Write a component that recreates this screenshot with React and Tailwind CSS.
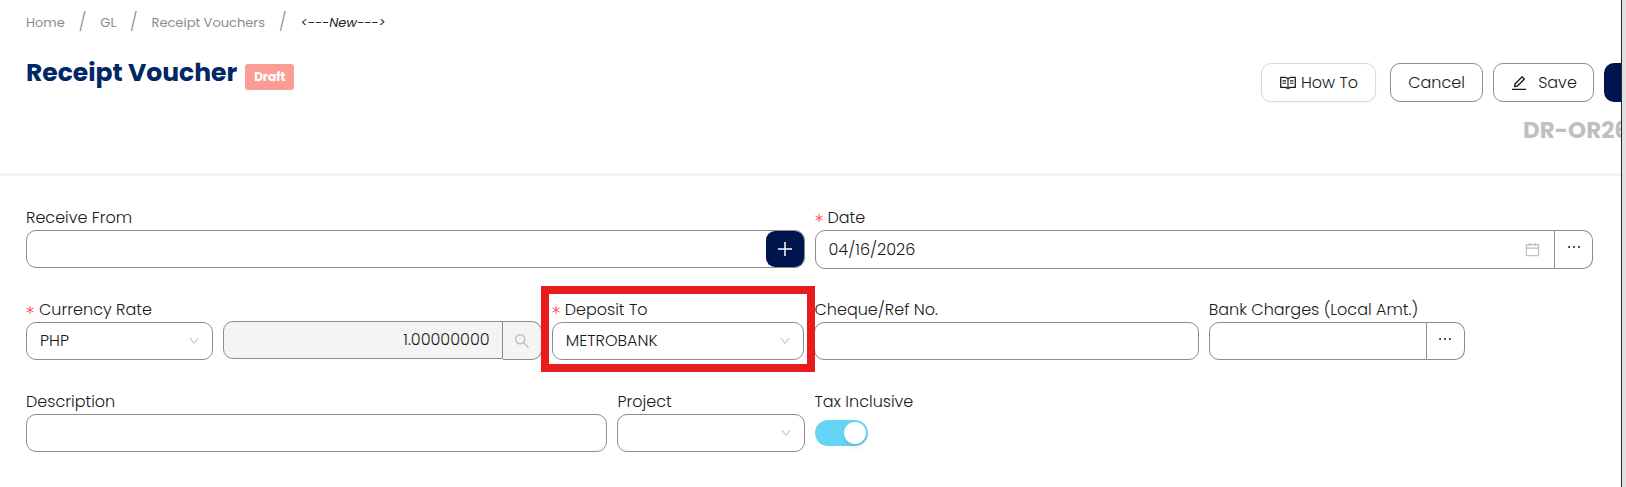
import React, { useState } from 'react';
import {
  AiOutlineRead,
  AiOutlineEdit,
  AiOutlinePlus,
  AiOutlineCalendar,
  AiOutlineEllipsis,
  AiOutlineSearch,
  AiOutlineDown,
} from 'react-icons/ai';

const CRUMBS = ['Home', 'GL', 'Receipt Vouchers'];

function RequiredMark() {
  return (
    <svg className="mr-[5px] size-2 shrink-0" viewBox="0 0 8 8" fill="none" stroke="#ff4d4f" aria-hidden="true">
      <path d="M4 0v8M0.5 2l7 4M7.5 2L0.5 6" />
    </svg>
  );
}

function Field({ id, label, required, className, children }) {
  return (
    <div className={className}>
      <label htmlFor={id} className="flex h-6 items-center whitespace-nowrap leading-6">
        {required && <RequiredMark />}
        {label}
      </label>
      {children}
    </div>
  );
}

function TextInput({ id }) {
  return <input id={id} type="text" className="block h-[38px] w-full rounded-[10px] border border-[#8c8c8c] px-3 outline-none" />;
}

function SelectInput({ id, options }) {
  return (
    <div className="grid items-center">
      <select
        id={id}
        className="col-start-1 row-start-1 h-[38px] w-full appearance-none rounded-[10px] border border-[#8c8c8c] bg-white px-[13px] outline-none"
      >
        {options.map((option) => (
          <option key={option}>{option}</option>
        ))}
      </select>
      <AiOutlineDown className="pointer-events-none col-start-1 row-start-1 mr-[13px] size-3 justify-self-end text-[#bfbfbf]" />
    </div>
  );
}

function MoreButton({ label }) {
  return (
    <button
      type="button"
      aria-label={label}
      className="flex w-[38px] shrink-0 items-start justify-center rounded-r-[10px] border border-l-0 border-[#8c8c8c] pt-[7px]"
    >
      <AiOutlineEllipsis className="size-[18px]" />
    </button>
  );
}

export default function App() {
  const [taxInclusive, setTaxInclusive] = useState(true);
  const [date, setDate] = useState('04/16/2026');

  return (
    <div className="flex min-h-screen overflow-hidden bg-white font-['Poppins','Inter',sans-serif] text-base font-light text-[#1a1a1a]">
      <main className="min-w-0 flex-1 border-r border-[#262626]">
        <header className="border-b-[3px] border-[#f2f2f2] pl-[26px]">
          <nav aria-label="Breadcrumb" className="flex h-[45px] items-center text-[13px] font-normal text-[#8c8c8c]">
            {CRUMBS.map((crumb) => (
              <React.Fragment key={crumb}>
                <a href="#">{crumb}</a>
                <span className="mx-3.5 text-[17px] font-light">/</span>
              </React.Fragment>
            ))}
            <em className="text-[#262626]">&lt;---New---&gt;</em>
          </nav>

          <div className="flex h-32 items-start justify-between">
            <div className="flex gap-2 pt-2">
              <h1 className="text-[25px] font-bold leading-10 text-[#002766]">Receipt Voucher</h1>
              <span className="mt-[11px] flex h-[26px] items-center rounded-[3px] bg-[#fb9d96] px-[9px] text-xs font-bold text-white">
                Draft
              </span>
            </div>

            <div className="flex flex-col items-end pt-[18px]">
              <div className="flex h-[39px] gap-2.5">
                <button
                  type="button"
                  className="mr-1 flex w-[115px] items-center justify-center gap-1 rounded-[10px] border border-[#d9d9d9] shadow-xs"
                >
                  <AiOutlineRead className="size-[18px]" />
                  How To
                </button>
                <button type="button" className="w-[93px] rounded-[10px] border border-[#8c8c8c]">
                  Cancel
                </button>
                <button
                  type="button"
                  className="flex w-[101px] items-center justify-center gap-2.5 rounded-[10px] border border-[#8c8c8c]"
                >
                  <AiOutlineEdit className="size-[18px]" />
                  Save
                </button>
                <button type="button" aria-label="Submit" className="w-[17px] rounded-l-[10px] bg-[#00154d]" />
              </div>
              <p className="mt-3 w-[98px] overflow-hidden whitespace-nowrap text-[23px] font-bold leading-8 text-[#bfbfbf]">
                DR-OR26
              </p>
            </div>
          </div>
        </header>

        <form className="pl-[26px] pr-7 pt-[30px]">
          <div className="grid min-h-23 grid-cols-24 items-start gap-x-2.5">
            <Field id="receiveFrom" label="Receive From" className="col-span-12">
              <div className="flex h-[38px] rounded-[10px] border border-[#8c8c8c]">
                <input id="receiveFrom" type="text" className="min-w-0 flex-1 rounded-l-[10px] px-3 outline-none" />
                <button
                  type="button"
                  aria-label="Add payer"
                  className="flex w-[38px] items-center justify-center rounded-[9px] bg-[#00154d] text-white"
                >
                  <AiOutlinePlus className="size-5" />
                </button>
              </div>
            </Field>
            <Field id="date" label="Date" required className="col-span-12">
              <div className="flex h-[39px]">
                <div className="flex min-w-0 flex-1 items-center rounded-l-[10px] border border-[#8c8c8c] px-[13px]">
                  <input
                    id="date"
                    type="text"
                    value={date}
                    onChange={(e) => setDate(e.target.value)}
                    className="min-w-0 flex-1 outline-none"
                  />
                  <AiOutlineCalendar className="size-[17px] text-[#bfbfbf]" />
                </div>
                <MoreButton label="More date options" />
              </div>
            </Field>
          </div>

          <div className="grid min-h-23 grid-cols-24 items-start gap-x-2.5">
            <Field id="currency" label="Currency Rate" required className="col-span-3">
              <SelectInput id="currency" options={['PHP']} />
            </Field>
            <div className="col-span-5 mt-[23px] flex h-[38px]">
              <input
                type="text"
                aria-label="Rate"
                defaultValue="1.00000000"
                disabled
                className="min-w-0 flex-1 rounded-l-[10px] border border-[#8c8c8c] bg-[#f4f4f4] px-3 text-right"
              />
              <button
                type="button"
                aria-label="Look up rate"
                className="flex h-[39px] w-[39px] items-center justify-center rounded-r-[10px] border border-l-0 border-[#8c8c8c] bg-[#f4f4f4] text-[#bfbfbf]"
              >
                <AiOutlineSearch className="size-[18px]" />
              </button>
            </div>
            <Field id="depositTo" label="Deposit To" required className="relative col-span-4">
              <SelectInput id="depositTo" options={['METROBANK']} />
              <div className="pointer-events-none absolute -inset-x-[11px] -inset-y-3 z-10 border-8 border-[#e81c1c]" />
            </Field>
            <Field id="chequeNo" label="Cheque/Ref No." className="col-span-6">
              <TextInput id="chequeNo" />
            </Field>
            <Field id="bankCharges" label="Bank Charges (Local Amt.)" className="col-span-4">
              <div className="flex h-[38px] w-64">
                <input
                  id="bankCharges"
                  type="text"
                  className="min-w-0 flex-1 rounded-l-[10px] border border-[#8c8c8c] px-3 outline-none"
                />
                <MoreButton label="More bank charge options" />
              </div>
            </Field>
          </div>

          <div className="grid grid-cols-24 items-start gap-x-2.5">
            <Field id="description" label="Description" className="col-span-9">
              <TextInput id="description" />
            </Field>
            <Field id="project" label="Project" className="col-span-3">
              <SelectInput id="project" options={['']} />
            </Field>
            <Field id="taxInclusive" label="Tax Inclusive" className="col-span-6">
              <input
                id="taxInclusive"
                type="checkbox"
                role="switch"
                checked={taxInclusive}
                onChange={(e) => setTaxInclusive(e.target.checked)}
                className="mt-1.5 flex h-[26px] w-[53px] appearance-none rounded-full bg-[#bfbfbf] p-0.5 before:size-[22px] before:rounded-full before:bg-white before:shadow-md before:content-[''] checked:justify-end checked:bg-[#65d5f5]"
              />
            </Field>
          </div>
        </form>
      </main>
      <div className="w-1 bg-[#e0e0e0]" />
    </div>
  );
}
